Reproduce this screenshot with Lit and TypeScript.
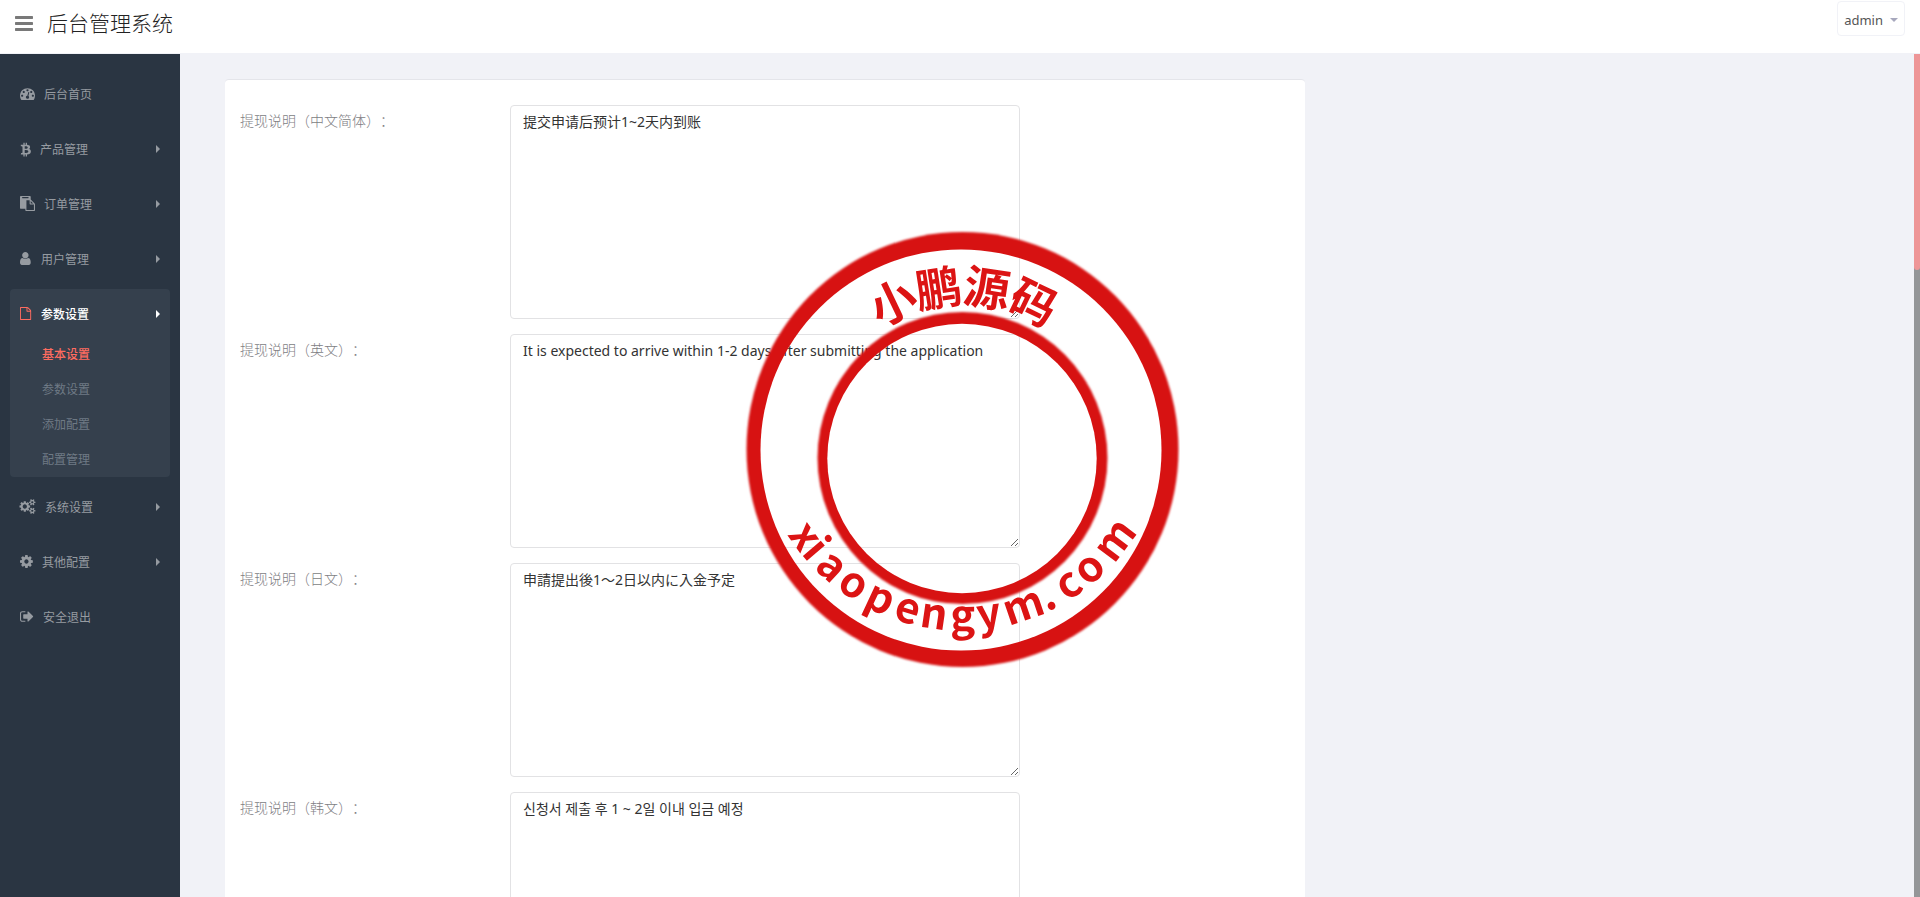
import { LitElement, html, svg, css } from "lit";
import { customElement, property } from "lit/decorators.js";
import { classMap } from "lit/directives/class-map.js";

interface Icon {
  x: number;
  width: number;
  y?: number;
  height?: number;
  path: string;
}

const GEAR_SMALL =
  "v140q0 16-149 31-12 27-30 52 51 113 51 138 0 4-4 7-122 71-124 71-8 0-46-47t-52-68q-20 2-30 2t-30-2q-14 21-52 68t-46 47q-2 0-124-71-4-3-4-7 0-25 51-138-18-25-30-52-149-15-149-31v-140q0-16 149-31 13-29 30-52-51-113-51-138 0-4 4-7 4-2 35-20t59-34 30-16q8 0 46 46.5t52 67.5q20-2 30-2t30 2q51-71 92-112l6-2q4 0 124 70 4 3 4 7 0 25-51 138 17 23 30 52 149 15 149 31z";

const ICONS: Record<string, Icon> = {
  bars: {
    x: 128,
    width: 1536,
    path: "M1664 1344v128q0 26-19 45t-45 19h-1408q-26 0-45-19t-19-45v-128q0-26 19-45t45-19h1408q26 0 45 19t19 45zm0-512v128q0 26-19 45t-45 19h-1408q-26 0-45-19t-19-45v-128q0-26 19-45t45-19h1408q26 0 45 19t19 45zm0-512v128q0 26-19 45t-45 19h-1408q-26 0-45-19t-19-45v-128q0-26 19-45t45-19h1408q26 0 45 19t19 45z",
  },
  dashboard: {
    x: 0,
    width: 1792,
    path: "M384 1152q0-53-37.5-90.5t-90.5-37.5-90.5 37.5-37.5 90.5 37.5 90.5 90.5 37.5 90.5-37.5 37.5-90.5zm192-448q0-53-37.5-90.5t-90.5-37.5-90.5 37.5-37.5 90.5 37.5 90.5 90.5 37.5 90.5-37.5 37.5-90.5zm428 481l101-382q6-26-7.5-48.5t-38.5-29.5-48 6.5-30 39.5l-101 382q-60 5-107 43.5t-63 98.5q-20 77 20 146t117 89 146-20 89-117q16-60-6-117t-72-91zm660-33q0-53-37.5-90.5t-90.5-37.5-90.5 37.5-37.5 90.5 37.5 90.5 90.5 37.5 90.5-37.5 37.5-90.5zm-640-640q0-53-37.5-90.5t-90.5-37.5-90.5 37.5-37.5 90.5 37.5 90.5 90.5 37.5 90.5-37.5 37.5-90.5zm448 192q0-53-37.5-90.5t-90.5-37.5-90.5 37.5-37.5 90.5 37.5 90.5 90.5 37.5 90.5-37.5 37.5-90.5zm320 448q0 261-141 483-19 29-54 29h-1402q-35 0-54-29-141-221-141-483 0-182 71-348t191-286 286-191 348-71 348 71 286 191 191 286 71 348z",
  },
  bitcoin: {
    x: 192,
    width: 1310,
    path: "M1399 711q18 182-131 258 117 28 175 103t45 214q-7 71-32.5 125t-64.5 89-97 58.5-121.5 34.5-145.5 15v255h-154v-251q-80 0-122-1v252h-154v-255q-18 0-54-.5t-55-.5h-200l31-183h111q50 0 58-51v-402h16q-6-1-16-1v-287q-13-68-89-68h-111v-164l212 1q64 0 97-1v-252h154v247q82-2 122-2v-245h154v252q79 7 140 22.5t113 45 82.5 78 36.5 114.5zm-215 545q0-36-15-64t-37-46-57.5-30.5-65.5-18.5-74-9-69-3-64.5 1-47.5 1v338q8 0 37 .5t48 .5 53-1.5 58.5-4 57-8.5 55.5-14 47.5-21 39.5-30 24.5-40 9.5-51zm-71-476q0-33-12.5-58.5t-30.5-42-48-28-55-16.5-61.5-8-58-2.5-54 1-39.5.5v307q5 0 34.5.5t46.5 0 50-2 55-5.5 51.5-11 48.5-18.5 37-27 27-38.5 9-51z",
  },
  paste: {
    x: 0,
    width: 1792,
    path: "M768 1664h896v-640h-416q-40 0-68-28t-28-68v-416h-384v1152zm256-1440v-64q0-13-9.5-22.5t-22.5-9.5h-704q-13 0-22.5 9.5t-9.5 22.5v64q0 13 9.5 22.5t22.5 9.5h704q13 0 22.5-9.5t9.5-22.5zm256 672h299l-299-299v299zm512 128v672q0 40-28 68t-68 28h-960q-40 0-68-28t-28-68v-160h-544q-40 0-68-28t-28-68v-1344q0-40 28-68t68-28h1088q40 0 68 28t28 68v328q21 13 36 28l408 408q28 28 48 76t20 88z",
  },
  user: {
    x: 256,
    width: 1400,
    path: "M1536 1399q0 109-62.5 187t-150.5 78h-854q-88 0-150.5-78t-62.5-187q0-85 8.5-160.5t31.5-152 58.5-131 94-89 134.5-34.5q131 128 313 128t313-128q76 0 134.5 34.5t94 89 58.5 131 31.5 152 8.5 160.5zm-256-887q0 159-112.5 271.5t-271.5 112.5-271.5-112.5-112.5-271.5 112.5-271.5 271.5-112.5 271.5 112.5 112.5 271.5z",
  },
  file: {
    x: 128,
    width: 1654,
    y: -138,
    height: 2068,
    path: "M1596 380q28 28 48 76t20 88v1152q0 40-28 68t-68 28h-1344q-40 0-68-28t-28-68v-1600q0-40 28-68t68-28h896q40 0 88 20t76 48zm-444-244v376h376q-10-29-22-41l-313-313q-12-12-41-22zm384 1528v-1024h-416q-40 0-68-28t-28-68v-416h-768v1536h1280z",
  },
  cogs: {
    x: 0,
    width: 1920,
    path:
      "M832 896q0-106-75-181t-181-75-181 75-75 181 75 181 181 75 181-75 75-181zm768 512q0-52-38-90t-90-38-90 38-38 90q0 53 37.5 90.5t90.5 37.5 90.5-37.5 37.5-90.5zm0-1024q0-52-38-90t-90-38-90 38-38 90q0 53 37.5 90.5t90.5 37.5 90.5-37.5 37.5-90.5zm-384 421v185q0 10-7 19.5t-16 10.5l-155 24q-11 35-32 76 34 48 90 115 7 11 7 20 0 12-7 19-23 30-82.5 89.5t-78.5 59.5q-11 0-21-7l-115-90q-37 19-77 31-11 108-23 155-7 24-30 24h-186q-11 0-20-7.5t-10-17.5l-23-153q-34-10-75-31l-118 89q-7 7-20 7-11 0-21-8-144-133-144-160 0-9 7-19 10-14 41-53t47-61q-23-44-35-82l-152-24q-10-1-17-9.5t-7-19.5v-185q0-10 7-19.5t16-10.5l155-24q11-35 32-76-34-48-90-115-7-11-7-20 0-12 7-20 22-30 82-89t79-59q11 0 21 7l115 90q34-18 77-32 11-108 23-154 7-24 30-24h186q11 0 20 7.5t10 17.5l23 153q34 10 75 31l118-89q8-7 20-7 11 0 21 8 144 133 144 160 0 8-7 19-12 16-42 54t-45 60q23 48 34 82l152 23q10 2 17 10.5t7 19.5z" +
      "M1856 1338" + GEAR_SMALL + "M1856 314" + GEAR_SMALL,
  },
  cog: {
    x: 128,
    width: 1536,
    path: "M1152 896q0-106-75-181t-181-75-181 75-75 181 75 181 181 75 181-75 75-181zm512-109v222q0 12-8 23t-20 13l-185 28q-19 54-39 91 35 50 107 138 10 12 10 25t-9 23q-27 37-99 108t-94 71q-12 0-26-9l-138-108q-44 23-91 38-16 136-29 186-7 28-36 28h-222q-14 0-24.5-8.5t-11.5-21.5l-28-184q-49-16-90-37l-141 107q-10 9-25 9-14 0-25-11-126-114-165-168-7-10-7-23 0-12 8-23 15-21 51-66.5t54-70.5q-27-50-41-99l-183-27q-13-2-21-12.5t-8-23.5v-222q0-12 8-23t19-13l186-28q14-46 39-92-40-57-107-138-10-12-10-24 0-10 9-23 26-36 98.5-107.5t94.5-71.5q13 0 26 10l138 107q44-23 91-38 16-136 29-186 7-28 36-28h222q14 0 24.5 8.5t11.5 21.5l28 184q49 16 90 37l142-107q9-9 24-9 13 0 25 10 129 119 165 170 7 8 7 22 0 12-8 23-15 21-51 66.5t-54 70.5q26 50 41 98l183 28q13 2 21 12.5t8 23.5z",
  },
  exit: {
    x: 64,
    width: 1664,
    path: "M704 1440q0 4 1 20t.5 26.5-3 23.5-10 19.5-20.5 6.5h-320q-119 0-203.5-84.5t-84.5-203.5v-704q0-119 84.5-203.5t203.5-84.5h320q13 0 22.5 9.5t9.5 22.5q0 4 1 20t.5 26.5-3 23.5-10 19.5-20.5 6.5h-320q-66 0-113 47t-47 113v704q0 66 47 113t113 47h312l11.5 1 11.5 3 8 5.5 7 9 2 13.5zm928-544q0 26-19 45l-544 544q-19 19-45 19t-45-19-19-45v-288h-448q-26 0-45-19t-19-45v-384q0-26 19-45t45-19h448v-288q0-26 19-45t45-19 45 19l544 544q19 19 19 45z",
  },
};

@customElement("app-icon")
export class AppIcon extends LitElement {
  @property() name = "bars";
  @property({ type: Number }) size = 15;

  static styles = css`
    :host { display: inline-flex; flex: none; }
    .glyph { display: block; fill: currentColor; overflow: visible; }
  `;

  render() {
    const icon = ICONS[this.name];
    const height = icon.height ?? 1792;
    const width = Math.round((icon.width / height) * this.size);
    return html`<svg class="glyph" aria-hidden="true" width=${width} height=${this.size}
      viewBox="${icon.x} ${icon.y ?? 0} ${icon.width} ${height}" preserveAspectRatio="xMinYMid meet">
      <path d=${icon.path}></path>
    </svg>`;
  }
}

interface ArcGlyph {
  char: string;
  angle: number;
  advance: number;
}

/* Angles are measured from the vertical, clockwise for the upper arc and
   counter-clockwise for the lower one; advances are in em. */
const UPPER: ArcGlyph[] = [
  { char: "小", angle: -25.5, advance: 1 },
  { char: "鹏", angle: -8.7, advance: 1 },
  { char: "源", angle: 8.5, advance: 1 },
  { char: "码", angle: 25.7, advance: 1 },
];

const LOWER: ArcGlyph[] = [
  { char: "x", angle: -54.5, advance: 0.55 },
  { char: "i", angle: -49.5, advance: 0.3 },
  { char: "a", angle: -42.5, advance: 0.59 },
  { char: "o", angle: -34.1, advance: 0.62 },
  { char: "p", angle: -25, advance: 0.64 },
  { char: "e", angle: -16.3, advance: 0.57 },
  { char: "n", angle: -8.3, advance: 0.63 },
  { char: "g", angle: 0.3, advance: 0.59 },
  { char: "y", angle: 8, advance: 0.55 },
  { char: "m", angle: 18.8, advance: 0.96 },
  { char: ".", angle: 26.4, advance: 0.32 },
  { char: "c", angle: 33.8, advance: 0.52 },
  { char: "o", angle: 41.6, advance: 0.62 },
  { char: "m", angle: 53, advance: 0.96 },
];

function arcText(glyphs: ArcGlyph[], cx: number, cy: number, radius: number, size: number, lower: boolean) {
  const xs: string[] = [];
  const ys: string[] = [];
  const turns: number[] = [];
  for (const g of glyphs) {
    const a = (g.angle * Math.PI) / 180;
    const turn = lower ? -a : a;
    const half = (g.advance * size) / 2;
    const px = cx + radius * Math.sin(a);
    const py = cy + (lower ? 1 : -1) * radius * Math.cos(a);
    xs.push((px - half * Math.cos(turn)).toFixed(1));
    ys.push((py - half * Math.sin(turn)).toFixed(1));
    turns.push((turn * 180) / Math.PI);
  }
  return svg`<text class="lettering" font-size=${size} x=${xs.join(" ")} y=${ys.join(" ")}
    rotate=${turns.join(" ")}>${glyphs.map((g) => g.char).join("")}</text>`;
}

@customElement("app-stamp")
export class AppStamp extends LitElement {
  static styles = css`
    :host { display: block; }
    .stamp { display: block; width: 440px; height: 440px; fill: #d71212; }
    .lettering { font-family: "Noto Sans CJK SC", sans-serif; font-weight: 700; fill: #dc1414; }
    .disc { filter: blur(1px); }
  `;

  render() {
    return html`<svg class="stamp" viewBox="0 0 440 440" role="img" aria-label="小鹏源码 xiaopengym.com">
      <defs>
        <mask id="outer"><rect width="440" height="440" fill="#fff"/><circle cx="221" cy="221" r="200.5" fill="#000"/></mask>
        <mask id="inner"><rect width="440" height="440" fill="#fff"/><circle cx="222" cy="229.5" r="134.7" fill="#000"/></mask>
      </defs>
      <g mask="url(#outer)"><ellipse class="disc" cx="222.5" cy="220.5" rx="216" ry="217.5"/></g>
      <g mask="url(#inner)"><ellipse class="disc" cx="222.5" cy="229" rx="145" ry="146"/></g>
      ${arcText(UPPER, 223, 220.5, 146, 46, false)}
      ${arcText(LOWER, 221.5, 195.5, 206, 42, true)}
    </svg>`;
  }
}

interface NavItem {
  icon: string;
  label: string;
  arrow?: boolean;
  children?: string[];
}

const NAV: NavItem[] = [
  { icon: "dashboard", label: "后台首页" },
  { icon: "bitcoin", label: "产品管理", arrow: true },
  { icon: "paste", label: "订单管理", arrow: true },
  { icon: "user", label: "用户管理", arrow: true },
  { icon: "file", label: "参数设置", arrow: true, children: ["基本设置", "参数设置", "添加配置", "配置管理"] },
  { icon: "cogs", label: "系统设置", arrow: true },
  { icon: "cog", label: "其他配置", arrow: true },
  { icon: "exit", label: "安全退出" },
];

const FIELDS = [
  { id: "zh", lang: "zh-CN", label: "提现说明（中文简体）：", value: "提交申请后预计1~2天内到账" },
  { id: "en", lang: "en", label: "提现说明（英文）：", value: "It is expected to arrive within 1-2 days after submitting the application" },
  { id: "ja", lang: "ja", label: "提现说明（日文）：", value: "申請提出後1～2日以内に入金予定" },
  { id: "ko", lang: "ko", label: "提现说明（韩文）：", value: "신청서 제출 후 1 ~ 2일 이내 입금 예정" },
];

@customElement("app-root")
export class AppRoot extends LitElement {
  static styles = css`
    :host {
      display: flex;
      flex-direction: column;
      height: 100vh;
      overflow: hidden;
      background: #f1f2f7;
      color: #797979;
      font-family: "Noto Sans", "Noto Sans CJK SC", sans-serif;
      font-size: 14px;
      line-height: 20px;
      text-spacing-trim: space-all;
    }
    * { box-sizing: border-box; }
    button, textarea { font-family: inherit; }

    .header {
      display: flex;
      align-items: flex-start;
      flex: none;
      height: 54px;
      padding: 1px 15px 0;
      background: #fff;
      border-bottom: 1px solid #f1f2f7;
    }
    .toggle {
      display: flex;
      padding: 12px 0 0;
      border: 0;
      background: none;
      color: #797979;
    }
    .title {
      flex: 1;
      margin: 0;
      padding: 7px 14px 0;
      color: #222;
      font-size: 21px;
      font-weight: 300;
      line-height: 30px;
    }
    .account {
      display: flex;
      align-items: center;
      gap: 7px;
      height: 35px;
      padding: 3px 6px 0;
      border: 1px solid #f1f2f7;
      border-radius: 4px;
      background: #fff;
      color: #555;
      font-size: 13px;
      line-height: 20px;
    }
    .caret {
      border: 4px solid transparent;
      border-top-color: #a7a8bd;
      border-bottom: 0;
    }

    .body { display: flex; flex: 1; min-height: 0; }
    .sidebar {
      flex: none;
      width: 180px;
      padding: 15px 10px;
      background: #2a3542;
    }
    .menu, .submenu { margin: 0; padding: 0; list-style: none; }
    .menu { display: flex; flex-direction: column; gap: 5px; }
    .item { border-radius: 4px; }
    .item.active { background: #35404d; }
    .link {
      display: flex;
      align-items: center;
      gap: 9px;
      height: 50px;
      padding: 0 10px;
      color: #969ba1;
      font-size: 12px;
      text-decoration: none;
    }
    .link app-icon { padding-bottom: 1px; }
    .text { flex: 1; padding-top: 2px; }
    .active .link { color: #fff; }
    .active app-icon { color: #ff6c60; }
    .arrow {
      border: 4px solid transparent;
      border-left-color: currentColor;
      border-right: 0;
    }
    .submenu { margin-top: -2px; }
    .sub {
      display: block;
      padding-left: 32px;
      color: #6f7a85;
      font-size: 12px;
      line-height: 35px;
      text-decoration: none;
    }
    .sub.current { color: #ff6c60; font-weight: 500; }
    .active .text { font-weight: 500; }

    .main { flex: 1; min-width: 0; overflow: hidden; padding: 25px 69px 0 45px; }
    .card {
      width: 66.6667%;
      padding: 25px 0;
      border-top: 1px solid #e4e5ea;
      border-radius: 4px;
      background: #fff;
    }
    .form { display: flex; flex-direction: column; gap: 15px; margin: 0; }
    .row { display: grid; grid-template-columns: 3fr 6fr 3fr; }
    .label { padding: 6px 15px 0; color: #807e83; font-weight: 300; }
    .field { display: flex; padding: 0 15px; }
    .input {
      flex: 1;
      min-width: 0;
      padding: 6px 12px;
      border: 1px solid #e2e2e4;
      border-radius: 4px;
      background: #fff;
      color: #333;
      font-size: 14px;
      line-height: 20px;
      resize: vertical;
      overflow: hidden;
    }

    .track { flex: none; width: 6px; background: #949698; }
    .thumb { height: 216px; border-radius: 0 0 3px 3px; background: #ee9697; }

    .watermark {
      position: fixed;
      inset: 0;
      display: grid;
      place-items: center;
      pointer-events: none;
    }
  `;

  private renderItem(item: NavItem) {
    return html`<li class=${classMap({ item: true, active: !!item.children })}>
      <a class="link" href="#">
        <app-icon name=${item.icon}></app-icon>
        <span class="text">${item.label}</span>
        ${item.arrow ? html`<span class="arrow"></span>` : null}
      </a>
      ${item.children
        ? html`<ul class="submenu">
            ${item.children.map(
              (c, i) => html`<li><a class=${classMap({ sub: true, current: i === 0 })} href="#">${c}</a></li>`
            )}
          </ul>`
        : null}
    </li>`;
  }

  render() {
    return html`
      <header class="header">
        <button class="toggle" aria-label="菜单"><app-icon name="bars" .size=${21}></app-icon></button>
        <h1 class="title">后台管理系统</h1>
        <button class="account">admin<span class="caret"></span></button>
      </header>
      <div class="body">
        <nav class="sidebar"><ul class="menu">${NAV.map((n) => this.renderItem(n))}</ul></nav>
        <main class="main">
          <section class="card">
            <form class="form">
              ${FIELDS.map(
                (f) => html`<div class="row">
                  <label class="label" for=${f.id}>${f.label}</label>
                  <div class="field">
                    <textarea class="input" id=${f.id} lang=${f.lang} rows="10" .value=${f.value}></textarea>
                  </div>
                </div>`
              )}
            </form>
          </section>
        </main>
        <div class="track"><div class="thumb"></div></div>
      </div>
      <div class="watermark"><app-stamp></app-stamp></div>
    `;
  }
}
